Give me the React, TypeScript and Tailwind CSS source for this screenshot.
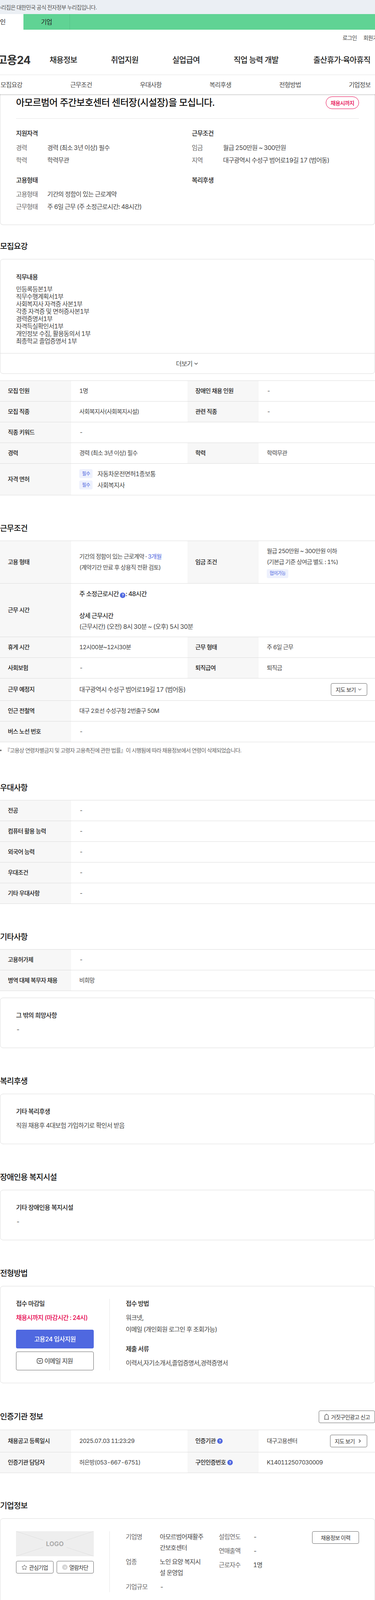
import type { ReactNode } from "react";
import { ChevronDown, ChevronRight, Star } from "lucide-react";

const fontStack = `font-['Inter','Noto_Sans_CJK_KR',sans-serif]`;

function Heading({ title, mt = "mt-[70px]", mb = "mb-[17px]" }: { title: string; mt?: string; mb?: string }) {
  return <h2 className={`h-[30px] text-[20px] leading-[30px] font-medium text-[#111] ${mt} ${mb}`}>{title}</h2>;
}

function Help() {
  return (
    <span className="inline-flex h-[14px] w-[14px] items-center justify-center rounded-full bg-[#4f68e0] align-[-1px] text-[9px] leading-none font-bold tracking-normal text-white">
      ?
    </span>
  );
}

function Chip({ label }: { label: string }) {
  return (
    <span className="inline-flex h-[23px] items-center rounded-[4px] bg-[#eef1fd] px-[7px] text-[12px] leading-none text-[#4f68e0]">
      {label}
    </span>
  );
}

function Label({ children }: { children: ReactNode }) {
  return (
    <div className="flex w-[182px] shrink-0 items-center bg-[#f7f7f7] pl-[20px] text-[15px] font-medium text-[#222]">{children}</div>
  );
}

type Pair = { label: ReactNode; value: ReactNode };

function Row({ left, right, h = "h-[53px]" }: { left: Pair; right?: Pair; h?: string }) {
  return (
    <div className={`flex border-b border-[#dcdcdc] ${h}`}>
      <Label>{left.label}</Label>
      <div className={`flex items-center pl-[21px] text-[15px] text-[#444] ${right ? "w-[298px]" : "flex-1"}`}>{left.value}</div>
      {right && (
        <>
          <Label>{right.label}</Label>
          <div className="flex flex-1 items-center pl-[21px] text-[15px] text-[#444]">{right.value}</div>
        </>
      )}
    </div>
  );
}

function Table({ children }: { children: ReactNode }) {
  return <div className="border-t border-[#dcdcdc]">{children}</div>;
}

function TextCard({ title, body }: { title: string; body: string }) {
  return (
    <div className="h-[129px] rounded-[8px] border border-[#dcdcdc] px-[40px] pt-[32px]">
      <p className="text-[16px] leading-[24px] font-medium text-[#222]">{title}</p>
      <p className="mt-[12px] text-[16px] leading-[24px] text-[#444]">{body}</p>
    </div>
  );
}

function OutlineBtn({ children, className }: { children: ReactNode; className: string }) {
  return (
    <button className={`flex items-center justify-center rounded-[4px] border border-[#666] bg-white text-[#333] ${className}`}>
      {children}
    </button>
  );
}

function SummaryRow({ label, value }: { label: string; value: string }) {
  return (
    <div className="flex text-[16px] leading-[32px]">
      <span className="w-[80px] text-[#666]">{label}</span>
      <span className="text-[#444]">{value}</span>
    </div>
  );
}

const navItems = [
  { label: "채용정보", w: "w-[157px]" },
  { label: "취업지원", w: "w-[157px]" },
  { label: "실업급여", w: "w-[157px]" },
  { label: "직업 능력 개발", w: "w-[204px]" },
  { label: "출산휴가·육아휴직", w: "w-[150px]" },
];

const subTabs = ["모집요강", "근무조건", "우대사항", "복리후생", "전형방법", "기업정보"];

const documents = [
  "민등록등본1부",
  "직무수행계획서1부",
  "사회복지사 자격증 사본1부",
  "각종 자격증 및 면허증사본1부",
  "경력증명서1부",
  "자격득실확인서1부",
  "개인정보 수집, 활용동의서 1부",
  "최종학교 졸업증명서 1부",
];

function CompanyField({ label, lines, w, h }: { label: string; lines: string[]; w: string; h: string }) {
  return (
    <div className={`flex text-[16px] leading-[28px] ${h}`}>
      <span className={`${w} shrink-0 text-[#666]`}>{label}</span>
      <span className="text-[#444]">
        {lines.map((line) => (
          <span key={line} className="block">
            {line}
          </span>
        ))}
      </span>
    </div>
  );
}

export default function App() {
  return (
    <div className={`relative h-[4108px] w-[960px] overflow-hidden bg-white tracking-[-0.05em] text-[#333] tabular-nums ${fontStack}`}>
      {/* 정부 누리집 안내 */}
      <div className="flex h-[36px] items-center bg-[#ebeff4] text-[14px] text-[#555]">
        <span className="-ml-[9px]">누리집은 대한민국 공식 전자정부 누리집입니다.</span>
      </div>
      <div className="flex h-[40px] bg-[#60d394] text-[16px] text-[#222]">
        <div className="-ml-[60px] flex w-[120px] items-center justify-center bg-white">개인</div>
        <div className="flex w-[119px] items-center justify-center border-r border-[#55c286]">기업</div>
      </div>

      {/* 헤더 */}
      <div className="flex h-[40px] items-center pl-[877px] text-[14px] text-[#444]">
        <span className="shrink-0">로그인</span>
        <span className="ml-[17px] shrink-0">회원가입</span>
      </div>
      <div className="flex h-[76px] items-center border-b border-[#e5e5e5]">
        <div className="-ml-[7px] w-[134px] shrink-0 text-[28px] leading-none font-bold text-[#333]">고용24</div>
        {navItems.map((item) => (
          <div key={item.label} className={`${item.w} shrink-0 text-[20px] font-medium whitespace-nowrap text-[#222]`}>
            {item.label}
          </div>
        ))}
      </div>

      {/* 탭 */}
      <div className="relative z-10 -ml-[60px] flex h-[49px] w-[1070px] bg-white shadow-[0_2px_3px_rgba(0,0,0,0.18)]">
        {subTabs.map((tab) => (
          <div key={tab} className="flex flex-1 items-center justify-center text-[16px] text-[#444]">
            {tab}
          </div>
        ))}
      </div>

      {/* 요약 */}
      <div className="rounded-b-[8px] border border-t-0 border-[#dcdcdc] px-[40px] pt-[6px] pb-[30px]">
        <div className="flex h-[32px] items-center justify-between">
          <h1 className="text-[24px] font-medium text-[#111]">아모르범어 주간보호센터 센터장(시설장)을 모십니다.</h1>
          <span className="flex h-[32px] w-[85px] items-center justify-center rounded-full border border-[#e6004c] text-[14px] font-medium text-[#e6004c]">
            채용시까지
          </span>
        </div>
        <div className="mt-[24px] border-t border-[#e5e5e5] pt-[21px]">
          <div className="grid grid-cols-2">
            <div>
              <p className="mb-[5px] text-[16px] leading-[32px] font-medium text-[#222]">지원자격</p>
              <SummaryRow label="경력" value="경력 (최소 3년 이상) 필수" />
              <SummaryRow label="학력" value="학력무관" />
            </div>
            <div className="pl-[11px]">
              <p className="mb-[5px] text-[16px] leading-[32px] font-medium text-[#222]">근무조건</p>
              <SummaryRow label="임금" value="월급 250만원 ~ 300만원" />
              <SummaryRow label="지역" value="대구광역시 수성구 범어로19길 17 (범어동)" />
            </div>
            <div className="mt-[19px]">
              <p className="mb-[4px] text-[16px] leading-[32px] font-medium text-[#222]">고용형태</p>
              <SummaryRow label="고용형태" value="기간의 정함이 있는 근로계약" />
              <SummaryRow label="근무형태" value="주 6일 근무 (주 소정근로시간: 48시간)" />
            </div>
            <div className="mt-[19px] pl-[11px]">
              <p className="text-[16px] leading-[32px] font-medium text-[#222]">복리후생</p>
            </div>
          </div>
        </div>
      </div>

      {/* 모집요강 */}
      <Heading title="모집요강" mt="mt-[40px]" />
      <div className="rounded-[8px] border border-[#dcdcdc]">
        <div className="border-b border-[#dcdcdc] px-[40px] pt-[33px] pb-[21px]">
          <p className="text-[16px] leading-[24px] font-medium text-[#222]">직무내용</p>
          <div className="mt-[10px] text-[16px] leading-[19px] text-[#444]">
            {documents.map((doc) => (
              <p key={doc}>{doc}</p>
            ))}
          </div>
        </div>
        <div className="flex h-[51px] items-center justify-center gap-[3px] text-[16px] text-[#444]">
          더보기
          <ChevronDown size={14} strokeWidth={2.5} />
        </div>
      </div>

      <div className="mt-[17px]">
        <Table>
          <Row left={{ label: "모집 인원", value: "1명" }} right={{ label: "장애인 채용 인원", value: "-" }} />
          <Row left={{ label: "모집 직종", value: "사회복지사(사회복지시설)" }} right={{ label: "관련 직종", value: "-" }} />
          <Row left={{ label: "직종 키워드", value: "-" }} />
          <Row left={{ label: "경력", value: "경력 (최소 3년 이상) 필수" }} right={{ label: "학력", value: "학력무관" }} />
          <Row
            h="h-[81px]"
            left={{
              label: "자격 면허",
              value: (
                <div className="flex flex-col gap-[5px]">
                  <div className="flex items-center gap-[12px] text-[16px]">
                    <Chip label="필수" />
                    자동차운전면허1종보통
                  </div>
                  <div className="flex items-center gap-[12px] text-[16px]">
                    <Chip label="필수" />
                    사회복지사
                  </div>
                </div>
              ),
            }}
          />
        </Table>
      </div>

      {/* 근무조건 */}
      <Heading title="근무조건" mb="mb-[16px]" />
      <Table>
        <Row
          h="h-[109px]"
          left={{
            label: "고용 형태",
            value: (
              <div className="leading-[28px]">
                <p>
                  기간의 정함이 있는 근로계약 · <span className="text-[#4f68e0]">3개월</span>
                </p>
                <p>(계약기간 만료 후 상용직 전환 검토)</p>
              </div>
            ),
          }}
          right={{
            label: "임금 조건",
            value: (
              <div className="leading-[28px]">
                <p>월급 250만원 ~ 300만원 이하</p>
                <p>(기본급 기준 상여금 별도 : 1%)</p>
                <Chip label="협의가능" />
              </div>
            ),
          }}
        />
        <Row
          h="h-[137px]"
          left={{
            label: "근무 시간",
            value: (
              <div className="text-[16px] leading-[28px] whitespace-nowrap">
                <p className="font-medium text-[#333]">
                  주 소정근로시간 <Help />: 48시간
                </p>
                <p className="h-[28px]" />
                <p className="font-medium text-[#333]">상세 근무시간</p>
                <p>(근무시간) (오전) 8시 30분 ~ (오후) 5시 30분</p>
              </div>
            ),
          }}
        />
        <Row left={{ label: "휴게 시간", value: "12시00분~12시30분" }} right={{ label: "근무 형태", value: "주 6일 근무" }} />
        <Row left={{ label: "사회보험", value: "-" }} right={{ label: "퇴직급여", value: "퇴직금" }} />
        <Row
          h="h-[57px]"
          left={{
            label: "근무 예정지",
            value: (
              <div className="flex w-full items-center justify-between pr-[20px] text-[16px]">
                대구광역시 수성구 범어로19길 17 (범어동)
                <OutlineBtn className="h-[32px] w-[93px] gap-[3px] text-[14px]">
                  지도 보기
                  <ChevronDown size={14} strokeWidth={1.75} />
                </OutlineBtn>
              </div>
            ),
          }}
        />
        <Row left={{ label: "인근 전철역", value: "대구 2호선 수성구청 2번출구 50M" }} />
        <Row left={{ label: "버스 노선 번호", value: "-" }} />
      </Table>
      <p className="mt-[9px] flex h-[23px] items-center gap-[8px] text-[14px] text-[#666]">
        <span className="h-[4px] w-[4px] rounded-full bg-[#666]" />
        『고용상 연령차별금지 및 고령자 고용촉진에 관한 법률』이 시행됨에 따라 채용정보에서 연령이 삭제되었습니다.
      </p>

      {/* 우대사항 */}
      <Heading title="우대사항" mb="mb-[16px]" />
      <Table>
        <Row left={{ label: "전공", value: "-" }} />
        <Row left={{ label: "컴퓨터 활용 능력", value: "-" }} />
        <Row left={{ label: "외국어 능력", value: "-" }} />
        <Row left={{ label: "우대조건", value: "-" }} />
        <Row left={{ label: "기타 우대사항", value: "-" }} />
      </Table>

      {/* 기타사항 */}
      <Heading title="기타사항" mb="mb-[16px]" />
      <Table>
        <Row left={{ label: "고용허가제", value: "-" }} />
        <Row left={{ label: "병역 대체 복무자 채용", value: "비희망" }} />
      </Table>
      <div className="mt-[17px]">
        <TextCard title="그 밖의 희망사항" body="-" />
      </div>

      <Heading title="복리후생" />
      <TextCard title="기타 복리후생" body="직원 채용후 4대보험 가입하기로 확인서 받음" />

      <Heading title="장애인용 복지시설" />
      <TextCard title="기타 장애인용 복지시설" body="-" />

      {/* 전형방법 */}
      <Heading title="전형방법" />
      <div className="flex rounded-[8px] border border-[#dcdcdc] px-[40px] py-[32px]">
        <div className="w-[199px] shrink-0">
          <p className="text-[16px] leading-[24px] font-medium text-[#222]">접수 마감일</p>
          <p className="mt-[12px] text-[16px] leading-[24px] font-medium text-[#e6004c]">채용시까지 (마감시간 : 24시)</p>
          <button className="mt-[19px] flex h-[48px] w-full items-center justify-center rounded-[4px] bg-[#4f68e0] text-[16px] font-medium text-white">
            고용24 입사지원
          </button>
          <OutlineBtn className="mt-[8px] h-[48px] w-full gap-[3px] text-[16px]">
            <svg width="16" height="16" viewBox="0 0 16 16" fill="none" stroke="#333" strokeWidth="1.4">
              <rect x="1" y="2" width="14" height="12" rx="3.5" />
              <path d="M5 6.5 8 9.5 11 6.5" strokeLinecap="round" strokeLinejoin="round" />
            </svg>
            이메일 지원
          </OutlineBtn>
        </div>
        <div className="ml-[40px] border-l border-[#e5e5e5] pl-[41px] text-[16px]">
          <p className="leading-[24px] font-medium text-[#222]">접수 방법</p>
          <div className="mt-[9px] leading-[30px] text-[#444]">
            <p>워크넷,</p>
            <p>이메일 (개인회원 로그인 후 조회가능)</p>
          </div>
          <p className="mt-[23px] leading-[24px] font-medium text-[#222]">제출 서류</p>
          <p className="mt-[12px] leading-[24px] text-[#444]">이력서,자기소개서,졸업증명서,경력증명서</p>
        </div>
      </div>

      {/* 인증기관 정보 */}
      <div className="mt-[71px] mb-[18px] flex h-[30px] items-center justify-between">
        <h2 className="text-[20px] leading-[30px] font-medium text-[#111]">인증기관 정보</h2>
        <OutlineBtn className="h-[32px] w-[144px] gap-[4px] text-[14px]">
          <svg width="14" height="16" viewBox="0 0 14 16" fill="none" stroke="#333" strokeWidth="1.2">
            <path d="M1 14.5h12M2.5 14.5V6.5a4.5 4.5 0 0 1 9 0v8" strokeLinejoin="round" />
            <path d="M7 .5v1.5" />
          </svg>
          거짓구인광고 신고
        </OutlineBtn>
      </div>
      <Table>
        <Row
          h="h-[57px]"
          left={{ label: "채용공고 등록일시", value: "2025.07.03 11:23:29" }}
          right={{
            label: (
              <span className="flex items-center gap-[4px]">
                인증기관 <Help />
              </span>
            ),
            value: (
              <div className="flex w-full items-center justify-between pr-[20px]">
                대구고용센터
                <OutlineBtn className="h-[32px] w-[95px] gap-[6px] text-[14px]">
                  지도 보기
                  <ChevronRight size={14} strokeWidth={2.5} />
                </OutlineBtn>
              </div>
            ),
          }}
        />
        <Row
          left={{ label: "인증기관 담당자", value: "허은방(053-667-6751)" }}
          right={{
            label: (
              <span className="flex items-center gap-[4px]">
                구인인증번호 <Help />
              </span>
            ),
            value: "K140112507030009",
          }}
        />
      </Table>

      {/* 기업정보 */}
      <Heading title="기업정보" mt="mt-[69px]" />
      <div className="flex h-[221px] rounded-[8px] border border-[#dcdcdc] px-[40px] pt-[32px]">
        <div className="w-[199px] shrink-0">
          <div className="relative flex h-[64px] items-center justify-center bg-[#eeeeee]">
            <svg className="absolute inset-0 h-full w-full" viewBox="0 0 199 64" preserveAspectRatio="none" stroke="#dedede" strokeWidth="1">
              <path d="M0 0 70 23M199 0 129 23M0 64 70 41M199 64 129 41" fill="none" />
            </svg>
            <span className="relative text-[16px] font-bold tracking-normal text-[#aaa]">LOGO</span>
          </div>
          <div className="mt-[12px] flex justify-between">
            <OutlineBtn className="h-[32px] w-[96px] gap-[4px] text-[14px]">
              <Star size={15} strokeWidth={1.5} />
              관심기업
            </OutlineBtn>
            <OutlineBtn className="h-[32px] w-[95px] gap-[4px] text-[14px]">
              <span className="flex h-[14px] w-[14px] items-center justify-center rounded-full bg-[#d5d5d5] text-[11px] leading-none text-white">
                ×
              </span>
              열람차단
            </OutlineBtn>
          </div>
        </div>
        <div className="ml-[40px] flex h-[156px] flex-1 border-l border-[#e5e5e5] pl-[41px]">
          <div className="w-[238px] shrink-0">
            <CompanyField label="기업명" w="w-[87px]" h="h-[64px]" lines={["아모르범어재활주", "간보호센터"]} />
            <CompanyField label="업종" w="w-[87px]" h="h-[64px]" lines={["노인 요양 복지시", "설 운영업"]} />
            <CompanyField label="기업규모" w="w-[87px]" h="h-[28px]" lines={["-"]} />
          </div>
          <div className="w-[239px] shrink-0">
            <CompanyField label="설립연도" w="w-[88px]" h="h-[36px]" lines={["-"]} />
            <CompanyField label="연매출액" w="w-[88px]" h="h-[36px]" lines={["-"]} />
            <CompanyField label="근로자수" w="w-[88px]" h="h-[28px]" lines={["1명"]} />
          </div>
          <OutlineBtn className="h-[32px] w-[120px] shrink-0 text-[14px]">채용정보 이력</OutlineBtn>
        </div>
      </div>
    </div>
  );
}
